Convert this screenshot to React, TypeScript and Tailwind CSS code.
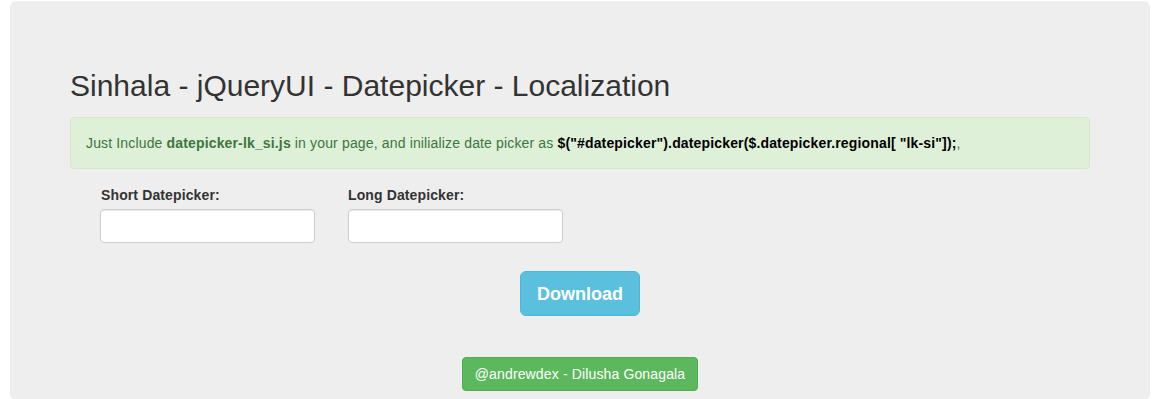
export default function App() {
  return (
    <div className="min-h-[399px] bg-white px-[10px] pt-px font-['Liberation_Sans',Arial,sans-serif] text-[14px] leading-[20px] text-[#333]">
      <div className="rounded-[6px] bg-[#eee] px-[60px] pt-[68px] pb-[9px]">
        <h2 className="text-[30px] leading-[33px] font-normal text-[#333]">
          Sinhala - jQueryUI - Datepicker - Localization
        </h2>
        <div className="mt-[15px] rounded-[4px] border border-[#d6e9c6] bg-[#dff0d8] p-[15px] tracking-[0.15px] text-[#3c763d]">
          Just Include <b>datepicker-lk_si.js</b> in your page, and inilialize date picker as{" "}
          <b className="text-black">$("#datepicker").datepicker($.datepicker.regional[ "lk-si"]);</b>,
        </div>
        <div className="mt-[16px] flex gap-[33px] pl-[30px] tracking-[0.12px]">
          <div className="flex w-[215px] flex-col">
            <label className="mb-[4px] pl-px font-bold">Short Datepicker:</label>
            <input className="h-[34px] rounded-[4px] border border-[#ccc] bg-white px-3 shadow-[inset_0_1px_1px_rgba(0,0,0,0.075)] outline-none" />
          </div>
          <div className="flex w-[215px] flex-col">
            <label className="mb-[4px] font-bold">Long Datepicker:</label>
            <input className="h-[34px] rounded-[4px] border border-[#ccc] bg-white px-3 shadow-[inset_0_1px_1px_rgba(0,0,0,0.075)] outline-none" />
          </div>
        </div>
        <div className="mt-[28px] flex justify-center">
          <button className="h-[45px] w-[120px] rounded-[6px] border border-[#46b8da] bg-[#5bc0de] text-[18px] font-bold text-white">
            Download
          </button>
        </div>
        <div className="mt-[41px] flex justify-center">
          <button className="h-[34px] rounded-[4px] border border-[#4cae4c] bg-[#5cb85c] px-[12px] text-[14px] tracking-[0.14px] text-white">
            @andrewdex - Dilusha Gonagala
          </button>
        </div>
      </div>
    </div>
  );
}
